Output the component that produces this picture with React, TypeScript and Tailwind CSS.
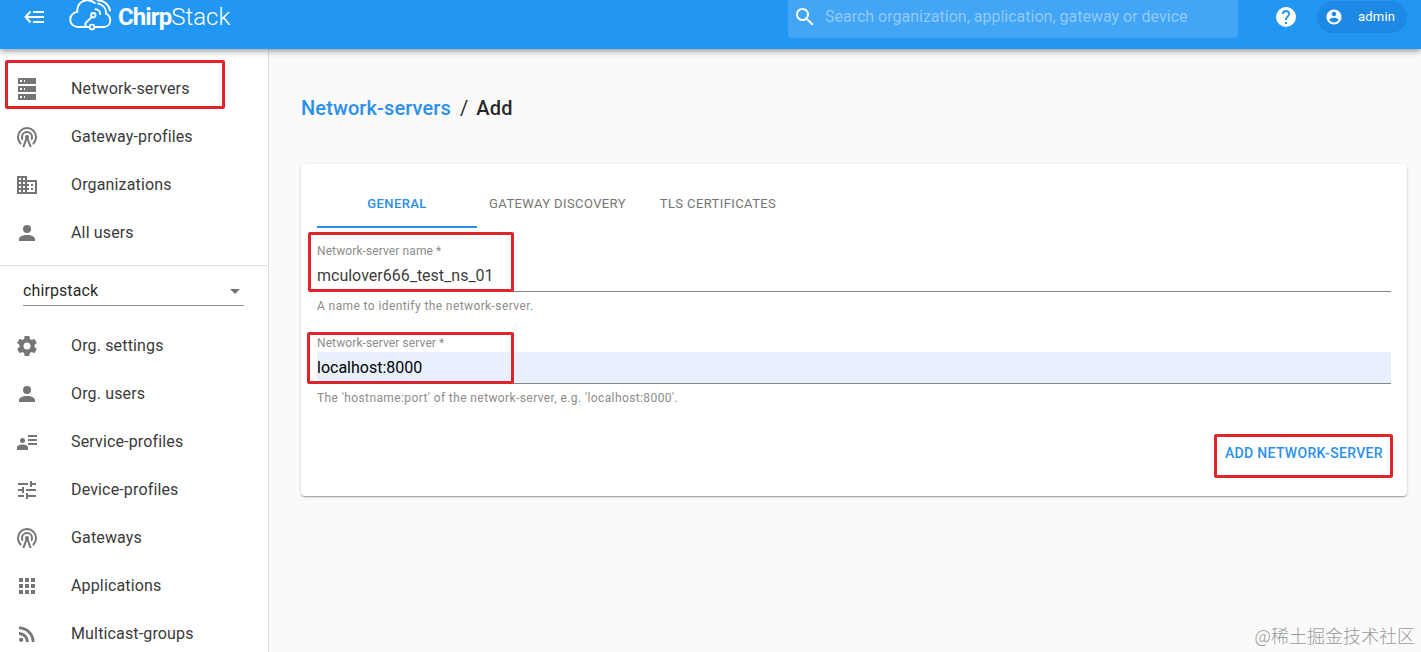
import React from "react";
import clsx from "clsx";

interface IconProps {
  d: string;
  className?: string;
}

const Icon: React.FC<IconProps> = ({ d, className }) => (
  <svg viewBox="0 0 24 24" className={clsx("shrink-0 fill-current", className)}>
    <path d={d} />
  </svg>
);

const icons = {
  server:
    "M3 1h18v6H3zM5 3v2h2v-2zM9 3v2h1v-2zM3 9h18v6H3zM5 11v2h2v-2zM9 11v2h1v-2zM3 17h18V23H3zM5 19v2h2v-2zM9 19v2h1v-2z",
  tower:
    "M12,10A2,2 0 0,1 14,12C14,12.5 13.82,12.94 13.53,13.29L16.7,22H14.57L12,14.93L9.43,22H7.3L10.47,13.29C10.18,12.94 10,12.5 10,12A2,2 0 0,1 12,10M12,8A4,4 0 0,0 8,12C8,12.5 8.1,13 8.28,13.46L7.4,15.86C6.53,14.81 6,13.47 6,12A6,6 0 0,1 12,6A6,6 0 0,1 18,12C18,13.47 17.47,14.81 16.6,15.86L15.72,13.46C15.9,13 16,12.5 16,12A4,4 0 0,0 12,8M12,4A8,8 0 0,0 4,12C4,14.36 5,16.5 6.64,17.94L5.92,19.94C3.54,18.11 2,15.23 2,12A10,10 0 0,1 12,2A10,10 0 0,1 22,12C22,15.23 20.46,18.11 18.08,19.94L17.36,17.94C19,16.5 20,14.36 20,12A8,8 0 0,0 12,4Z",
  domain:
    "M12 7V3H2v18h20V7H12zM6 19H4v-2h2v2zm0-4H4v-2h2v2zm0-4H4V9h2v2zm0-4H4V5h2v2zm4 12H8v-2h2v2zm0-4H8v-2h2v2zm0-4H8V9h2v2zm0-4H8V5h2v2zm10 12h-8v-2h2v-2h-2v-2h2v-2h-2V9h8v10zm-2-8h-2v2h2v-2zm0 4h-2v2h2v-2z",
  account:
    "M12,4A4,4 0 0,1 16,8A4,4 0 0,1 12,12A4,4 0 0,1 8,8A4,4 0 0,1 12,4M12,14C16.42,14 20,15.79 20,18V20H4V18C4,15.79 7.58,14 12,14Z",
  settings:
    "M12,15.5A3.5,3.5 0 0,1 8.5,12A3.5,3.5 0 0,1 12,8.5A3.5,3.5 0 0,1 15.5,12A3.5,3.5 0 0,1 12,15.5M19.43,12.97C19.47,12.65 19.5,12.33 19.5,12C19.5,11.67 19.47,11.34 19.43,11L21.54,9.37C21.73,9.22 21.78,8.95 21.66,8.73L19.66,5.27C19.54,5.05 19.27,4.96 19.05,5.05L16.56,6.05C16.04,5.66 15.5,5.32 14.87,5.07L14.5,2.42C14.46,2.18 14.25,2 14,2H10C9.75,2 9.54,2.18 9.5,2.42L9.13,5.07C8.5,5.32 7.96,5.66 7.44,6.05L4.95,5.05C4.73,4.96 4.46,5.05 4.34,5.27L2.34,8.73C2.21,8.95 2.27,9.22 2.46,9.37L4.57,11C4.53,11.34 4.5,11.67 4.5,12C4.5,12.33 4.53,12.65 4.57,12.97L2.46,14.63C2.27,14.78 2.21,15.05 2.34,15.27L4.34,18.73C4.46,18.95 4.73,19.03 4.95,18.95L7.44,17.94C7.96,18.34 8.5,18.68 9.13,18.93L9.5,21.58C9.54,21.82 9.75,22 10,22H14C14.25,22 14.46,21.82 14.5,21.58L14.87,18.93C15.5,18.67 16.04,18.34 16.56,17.94L19.05,18.95C19.27,19.03 19.54,18.95 19.66,18.73L21.66,15.27C21.78,15.05 21.73,14.78 21.54,14.63L19.43,12.97Z",
  accountDetails:
    "M13 5h9v2h-9zM13 9h9v2h-9zM13 13h9v2h-9zM7.5 8a2.5 2.5 0 1 1 0 5a2.5 2.5 0 0 1 0-5M7.5 14.500C10.500 14.500 13 15.500 13 17.500V20H2v-2.500C2 15.500 4.500 14.500 7.500 14.500z",
  tune: "M3 17v2h6v-2H3zM3 5v2h10V5H3zm10 16v-2h8v-2h-8v-2h-2v6h2zM7 9v2H3v2h4v2h2V9H7zm14 4v-2H11v2h10zm-6-4h2V7h4V5h-4V3h-2v6z",
  apps: "M4 8h4V4H4v4zm6 12h4v-4h-4v4zm-6 0h4v-4H4v4zm0-6h4v-4H4v4zm6 0h4v-4h-4v4zm6-10v4h4V4h-4zm-6 4h4V4h-4v4zm6 6h4v-4h-4v4zm0 6h4v-4h-4v4z",
  rss: "M6.18,15.64A2.18,2.18 0 0,1 8.36,17.82C8.36,19 7.38,20 6.18,20C5,20 4,19 4,17.82A2.18,2.18 0 0,1 6.18,15.64M4,4.44A15.56,15.56 0 0,1 19.56,20H16.73A12.73,12.73 0 0,0 4,7.27V4.44M4,10.1A9.9,9.9 0 0,1 13.9,20H11.07A7.07,7.07 0 0,0 4,12.93V10.1Z",
  search:
    "M15.5 14h-.79l-.28-.27C15.41 12.59 16 11.11 16 9.5 16 5.91 13.09 3 9.5 3S3 5.91 3 9.5 5.91 16 9.5 16c1.61 0 3.09-.59 4.23-1.57l.27.28v.79l5 4.99L20.49 19l-4.99-5zm-6 0C7.01 14 5 11.99 5 9.5S7.01 5 9.5 5 14 7.01 14 9.5 11.99 14 9.5 14z",
  help: "M15.07,11.25L14.17,12.17C13.45,12.89 13,13.5 13,15H11V14.5C11,13.39 11.45,12.39 12.17,11.67L13.41,10.41C13.78,10.05 14,9.55 14,9C14,7.89 13.1,7 12,7A2,2 0 0,0 10,9H8A4,4 0 0,1 12,5A4,4 0 0,1 16,9C16,9.88 15.64,10.67 15.07,11.25M13,19H11V17H13M12,2A10,10 0 0,0 2,12A10,10 0 0,0 12,22A10,10 0 0,0 22,12C22,6.47 17.5,2 12,2Z",
  accountCircle:
    "M12 2C6.48 2 2 6.48 2 12s4.480 10 10 10 10-4.480 10-10S17.520 2 12 2zm0 3c1.660 0 3 1.340 3 3s-1.340 3-3 3-3-1.340-3-3 1.340-3 3-3zm0 14.200c-2.500 0-4.710-1.280-6-3.220.030-1.990 4-3.080 6-3.080 1.990 0 5.970 1.090 6 3.080-1.290 1.940-3.500 3.220-6 3.220z",
  menuDown: "M7 10l5 5 5-5z",
};

const adminItems = [
  { label: "Network-servers", icon: icons.server },
  { label: "Gateway-profiles", icon: icons.tower },
  { label: "Organizations", icon: icons.domain },
  { label: "All users", icon: icons.account },
];

const orgItems = [
  { label: "Org. settings", icon: icons.settings },
  { label: "Org. users", icon: icons.account },
  { label: "Service-profiles", icon: icons.accountDetails },
  { label: "Device-profiles", icon: icons.tune },
  { label: "Gateways", icon: icons.tower },
  { label: "Applications", icon: icons.apps },
  { label: "Multicast-groups", icon: icons.rss },
];

const Highlight: React.FC<{ className: string }> = ({ className }) => (
  <div className={clsx("pointer-events-none absolute z-20 rounded-[2px] border-3 border-[#e0242c]", className)} />
);

const NavList: React.FC<{ items: { label: string; icon: string }[] }> = ({ items }) => (
  <ul>
    {items.map((item) => (
      <li key={item.label} className="flex h-12 items-center pl-[15px]">
        <Icon d={item.icon} className="size-6 text-[#757575]" />
        <span className="ml-8 text-base tracking-[0.15px] text-[#3a3a3a]">{item.label}</span>
      </li>
    ))}
  </ul>
);

const Logo = () => (
  <div className="ml-[23px] flex h-[34px] w-[164px] items-center text-white">
    <svg viewBox="0 0 44 34" className="h-[34px] w-11 shrink-0" fill="none" stroke="currentColor" strokeWidth="1.9" strokeLinecap="round">
      <path d="M20.500 27H9.500C4.500 27 1.200 23.800 1.200 19.700C1.200 15.500 4.400 12.200 8.300 11.900C7.500 5.500 12 0.200 18.500 0.200C21.500 0.200 24 1.300 25.800 3" />
      <path d="M26 27H34.500C38.500 27 41.300 24.300 41.300 20.500C41.300 17.300 39.700 14.800 37 13.700C37.300 8.500 34 4.500 29 3.500" />
      <path d="M28.500 0.200C35 0.500 40 4.500 41 10.500" />
      <path d="M26.500 9.300C29 9.300 31.200 11.200 31.200 14" />
      <circle cx="24.300" cy="15.200" r="2.200" />
      <circle cx="23" cy="27" r="2.400" />
      <path d="M22.700 17L16.500 23.200V26.800" />
    </svg>
    <span className="ml-[5px] text-2xl leading-none font-bold tracking-[-0.9px]">Chirp</span>
    <span className="text-2xl leading-none font-light">Stack</span>
  </div>
);

const Header = () => (
  <header className="relative z-10 flex h-[49px] shrink-0 items-start bg-[#2196f3] text-white shadow-[0_2px_4px_-1px_rgba(0,0,0,0.2),0_4px_5px_0_rgba(0,0,0,0.14),0_1px_10px_0_rgba(0,0,0,0.12)]">
    <svg viewBox="0 0 24 24" className="mt-[5px] ml-[22px] size-6" fill="none" stroke="currentColor" strokeWidth="2">
      <path d="M8.500 6.500L3.500 12L8.500 17.500M4 12H22M11 7H22M11 17H22" />
    </svg>
    <Logo />
    <div className="ml-auto flex h-[38px] w-[450px] rounded-b-sm bg-[#42a5f5] pt-[5px] pl-[5px]">
      <Icon d={icons.search} className="size-6" />
      <span className="ml-2 text-base text-[#90caf9]">Search organization, application, gateway or device</span>
    </div>
    <Icon d={icons.help} className="mt-[5px] ml-9 size-6" />
    <div className="mt-px mr-[14px] ml-[19px] flex h-8 w-[90px] items-center rounded-full bg-[#1e88e5] pl-[8px]">
      <Icon d={icons.accountCircle} className="size-[18px]" />
      <span className="ml-[15px] text-[13px] tracking-[0.2px]">admin</span>
    </div>
  </header>
);

const Sidebar = () => (
  <aside className="relative w-[269px] shrink-0 border-r border-[#e0e0e0] bg-white pt-4">
    <NavList items={adminItems} />
    <div className="mt-2 border-t border-[#e0e0e0] pt-2.5 pl-[23px]">
      <div className="flex h-[30px] w-[221px] items-center justify-between border-b border-[#949494] text-base tracking-[0.1px] text-black/87">
        chirpstack
        <Icon d={icons.menuDown} className="-mr-[3px] size-6 text-[#757575]" />
      </div>
    </div>
    <div className="mt-4">
      <NavList items={orgItems} />
    </div>
    <Highlight className="top-[11px] left-[5px] h-[49px] w-[220px]" />
  </aside>
);

interface FieldProps {
  label: string;
  value: string;
  help: string;
  filled?: boolean;
  highlight: string;
}

const Field: React.FC<FieldProps> = ({ label, value, help, filled, highlight }) => (
  <div className="relative h-[92px] pt-[15px]">
    <div className="h-[17px] text-xs leading-[17px] tracking-[0.1px] text-[#8c8c8c]">{label} *</div>
    <div
      className={clsx(
        "h-8 border-b border-[#858585] text-base leading-8",
        filled ? "bg-[#e8f0fe] text-black" : "text-black/80",
      )}
    >
      {value}
    </div>
    <p className="mt-[5px] text-xs leading-[18px] tracking-[0.4px] text-[#8c8c8c]">{help}</p>
    <Highlight className={highlight} />
  </div>
);

const Content = () => (
  <main className="flex-1 pr-[14px] pl-8">
    <h1 className="mt-[45px] flex h-7 items-center text-xl font-medium tracking-[0.12px] text-black/87">
      <span className="text-[#2b90e9]">Network-servers</span>
      <span className="mr-[8px] ml-[9px] font-normal">/</span>
      Add
    </h1>
    <section className="relative mt-[42px] h-[332px] rounded bg-white px-4 pt-4 shadow-[0_1px_3px_rgba(0,0,0,0.2),0_1px_1px_rgba(0,0,0,0.14),0_2px_1px_-1px_rgba(0,0,0,0.12)]">
      <nav className="flex h-12 text-[13px] tracking-[0.4px] text-[#757575]">
        <span className="flex w-40 items-center justify-center border-b-2 border-[#2b90e9] pt-0.5 font-medium text-[#2b90e9]">
          GENERAL
        </span>
        <span className="flex w-[161px] items-center justify-center">GATEWAY DISCOVERY</span>
        <span className="flex w-40 items-center justify-center">TLS CERTIFICATES</span>
      </nav>
      <Field
        label="Network-server name"
        value="mculover666_test_ns_01"
        help="A name to identify the network-server."
        highlight="top-[4px] -left-[9px] h-[60px] w-[206px]"
      />
      <Field
        label="Network-server server"
        value="localhost:8000"
        help="The 'hostname:port' of the network-server, e.g. 'localhost:8000'."
        filled
        highlight="top-[12px] -left-[10px] h-[52px] w-[207px]"
      />
      <button className="mt-[23px] ml-auto flex h-9 items-center px-2 text-sm font-medium tracking-[0.33px] text-[#2b90e9]">
        ADD NETWORK-SERVER
      </button>
      <Highlight className="right-[14px] bottom-[18px] h-[44px] w-[179px]" />
    </section>
  </main>
);

const App = () => (
  <div className="relative flex h-[652px] w-full flex-col overflow-hidden bg-[#fafafa] font-[Roboto,'Noto_Sans_CJK_SC',sans-serif]">
    <Header />
    <div className="flex min-h-0 flex-1">
      <Sidebar />
      <Content />
    </div>
    <div className="absolute right-[6px] bottom-[3px] font-['Noto_Sans_CJK_SC',sans-serif] text-lg font-light text-[#999]">
      @稀土掘金技术社区
    </div>
  </div>
);

export default App;
